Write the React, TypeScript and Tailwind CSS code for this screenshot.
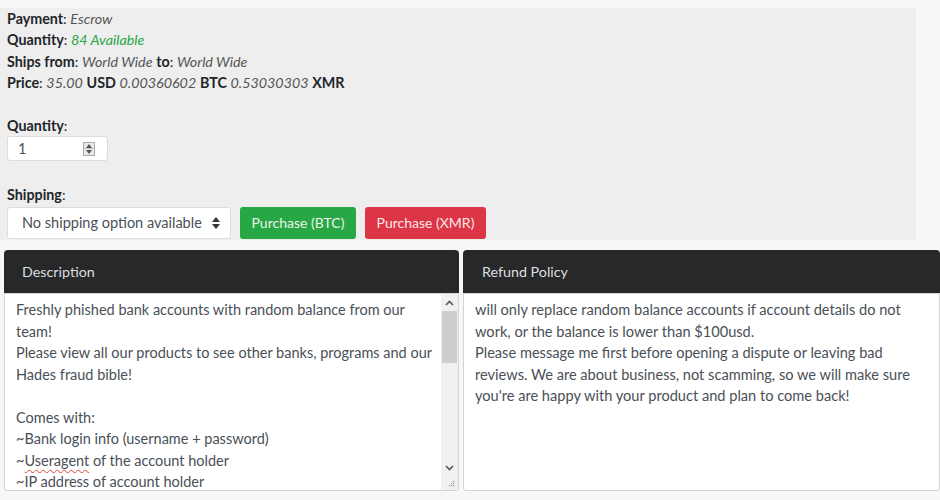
import React from "react"

const font = { fontFamily: 'Lato, "Open Sans", Arial, sans-serif' }

function Spinner() {
  return (
    <div className="flex flex-col w-[12px] h-[14px] border border-[#a9a9a9] bg-[#e9e9e9]">
      <div className="flex-1 flex items-center justify-center border-b border-[#c4c4c4]">
        <svg width="6" height="4" viewBox="0 0 6 4">
          <path d="M0 4 L3 0 L6 4 Z" fill="#555" />
        </svg>
      </div>
      <div className="flex-1 flex items-center justify-center">
        <svg width="6" height="4" viewBox="0 0 6 4">
          <path d="M0 0 L3 4 L6 0 Z" fill="#555" />
        </svg>
      </div>
    </div>
  )
}

function SelectArrows() {
  return (
    <svg width="8" height="12" viewBox="0 0 8 12">
      <path d="M0 5 L4 0 L8 5 Z" fill="#333" />
      <path d="M0 7 L4 12 L8 7 Z" fill="#333" />
    </svg>
  )
}

function FakeScrollbar() {
  return (
    <div className="w-[17px] flex flex-col bg-[#f0f0f0]">
      <div className="h-[17px] flex items-center justify-center">
        <svg width="9" height="6" viewBox="0 0 9 6">
          <path d="M1 5 L4.5 1.5 L8 5" stroke="#555" strokeWidth="1.6" fill="none" />
        </svg>
      </div>
      <div className="mx-[1px] h-[52px] bg-[#cdcdcd]" />
      <div className="flex-1" />
      <div className="h-[17px] flex items-center justify-center">
        <svg width="9" height="6" viewBox="0 0 9 6">
          <path d="M1 1 L4.5 4.5 L8 1" stroke="#555" strokeWidth="1.6" fill="none" />
        </svg>
      </div>
      <div className="h-[14px]" />
    </div>
  )
}

function Grip() {
  return (
    <svg width="7" height="7" viewBox="0 0 7 7" className="absolute right-[3px] bottom-[3px]">
      <rect x="5" y="1" width="1.2" height="1.2" fill="#999" />
      <rect x="3" y="3" width="1.2" height="1.2" fill="#999" />
      <rect x="5" y="3" width="1.2" height="1.2" fill="#999" />
      <rect x="1" y="5" width="1.2" height="1.2" fill="#999" />
      <rect x="3" y="5" width="1.2" height="1.2" fill="#999" />
      <rect x="5" y="5" width="1.2" height="1.2" fill="#999" />
    </svg>
  )
}

export default function App() {
  return (
    <div style={font} className="w-[940px] h-[500px] overflow-hidden bg-[#f7f7f7] text-[#212529] text-[14.3px]">
      <div className="h-[8px]" />
      <div className="w-[916px] h-[232px] bg-[#eeeeee] rounded-br-[4px] pl-[7px] leading-[21.3px]">
        <div>
          <b>Payment</b>: <i className="text-[#555]">Escrow</i>
        </div>
        <div>
          <b>Quantity</b>: <i className="text-[#28a745]">84 Available</i>
        </div>
        <div>
          <b>Ships from</b>: <i className="text-[#555]">World Wide</i> <b>to</b>:{" "}
          <i className="text-[#555]">World Wide</i>
        </div>
        <div>
          <b>Price</b>: <i className="text-[#555]">35.00</i> <b>USD</b>{" "}
          <i className="text-[#555]">0.00360602</i> <b>BTC</b>{" "}
          <i className="text-[#555]">0.53030303</i> <b>XMR</b>
        </div>

        <div className="mt-[22px]">
          <b>Quantity</b>:
        </div>
        <div className="w-[101px] h-[25px] bg-white border border-[#dcdcdc] rounded-[3px] flex items-center pl-[10px] pr-[12px] justify-between text-[14.5px] text-[#495057]">
          <span>1</span>
          <Spinner />
        </div>

        <div className="mt-[23px]">
          <b>Shipping</b>:
        </div>
        <div className="flex gap-[9px] mt-[1px]">
          <div className="w-[224px] h-[32px] bg-white border border-[#dcdcdc] rounded-[3px] flex items-center justify-between pl-[14px] pr-[10px] text-[14.5px] text-[#495057] whitespace-nowrap">
            <span>No shipping option available</span>
            <SelectArrows />
          </div>
          <button className="h-[32px] w-[116px] bg-[#28a745] text-[#e8f5ea] rounded-[3px] text-[14px] whitespace-nowrap">
            Purchase (BTC)
          </button>
          <button className="h-[32px] w-[121px] bg-[#dc3545] text-[#fbe8ea] rounded-[3px] text-[14px] whitespace-nowrap">
            Purchase (XMR)
          </button>
        </div>
      </div>

      <div className="flex gap-[4px] mt-[10px] pl-[4px]">
        <div className="w-[455px] flex flex-col">
          <div className="h-[43px] bg-[#27282a] rounded-t-[4px] flex items-center pl-[18px] text-[#dedede] text-[14.3px]">
            Description
          </div>
          <div className="relative h-[198px] bg-white border border-[#d4d4d4] rounded-b-[3px] flex overflow-hidden">
            <div className="flex-1 pl-[11px] pr-[2px] pt-[5px] text-[14.5px] leading-[21.5px] text-[#495057]">
              <div>Freshly phished bank accounts with random balance from our team!</div>
              <div>Please view all our products to see other banks, programs and our Hades fraud bible!</div>
              <div>&nbsp;</div>
              <div>Comes with:</div>
              <div>~Bank login info (username + password)</div>
              <div>
                ~<span className="underline decoration-wavy decoration-[#e0453a] decoration-[1px] underline-offset-[3px]">Useragent</span> of the account holder
              </div>
              <div>~IP address of account holder</div>
            </div>
            <FakeScrollbar />
            <Grip />
          </div>
        </div>
        <div className="flex-1 flex flex-col">
          <div className="h-[43px] bg-[#27282a] rounded-t-[4px] flex items-center pl-[19px] text-[#dedede] text-[14.3px]">
            Refund Policy
          </div>
          <div className="relative h-[198px] bg-white border border-[#d4d4d4] rounded-b-[3px] px-[11px] pt-[5px] text-[14.6px] leading-[21.5px] text-[#495057]">
            <div>will only replace random balance accounts if account details do not work, or the balance is lower than $100usd.</div>
            <div>
              Please message me first before opening a dispute or leaving bad reviews. We are about business, not scamming, so we will make sure you're are happy with your product and plan to come back!
            </div>
          </div>
        </div>
      </div>
    </div>
  )
}
